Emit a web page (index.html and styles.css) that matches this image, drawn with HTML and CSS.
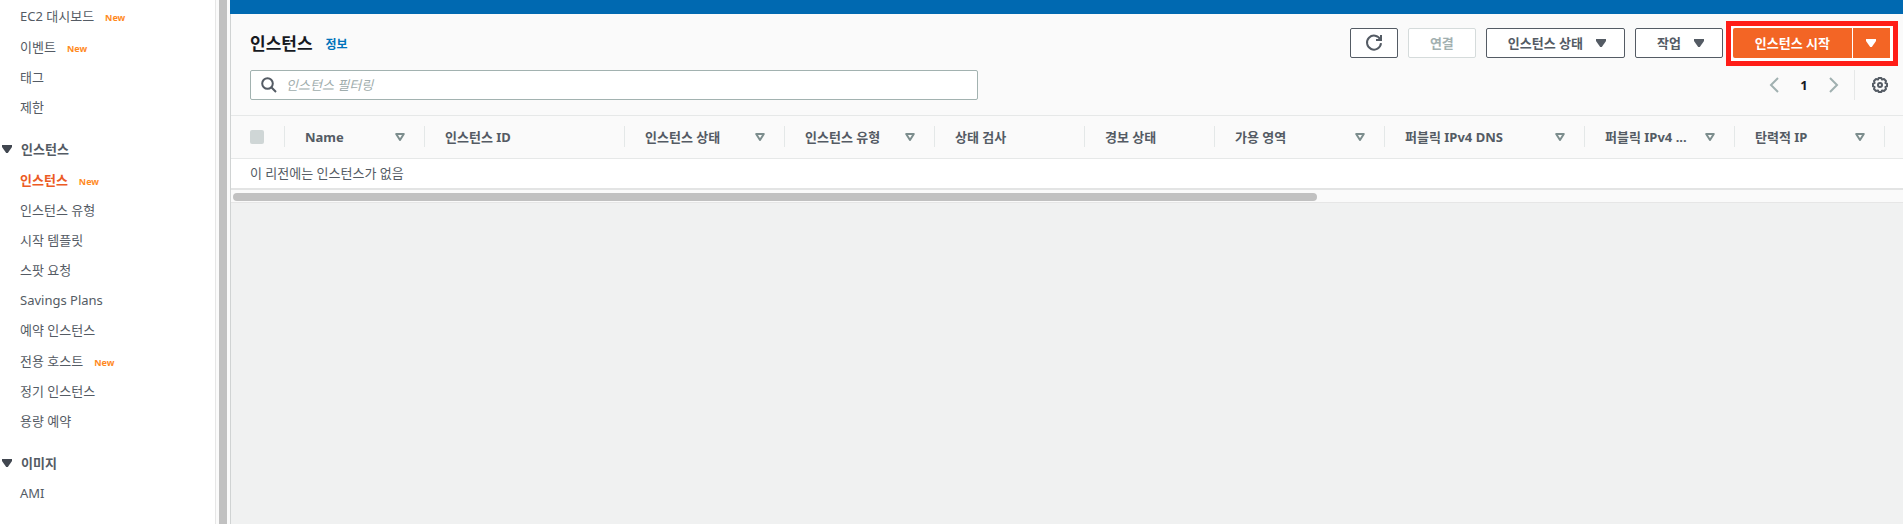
FILE: index.html
```html
<!DOCTYPE html>
<html lang="ko">
<head>
<meta charset="utf-8">
<title>인스턴스</title>
<link rel="stylesheet" href="styles.css">
</head>
<body>
<svg class="defs" aria-hidden="true">
  <symbol id="down" viewBox="0 0 10 8"><path d="M0 0H10V2L5.800 8H4.200L0 2Z" fill="currentColor"/></symbol>
  <symbol id="sort" viewBox="0 0 10 8"><path d="M1.200 1H8.800L5 7Z" fill="none" stroke="currentColor" stroke-width="2" stroke-linejoin="round"/></symbol>
</svg>
<div class="app">
  <nav class="sidebar">
    <div class="menu">
      <ul class="list">
        <li class="item has-new"><a href="#">EC2 대시보드</a><span class="new">New</span></li>
        <li class="item has-new"><a href="#">이벤트</a><span class="new">New</span></li>
        <li class="item"><a href="#">태그</a></li>
        <li class="item"><a href="#">제한</a></li>
      </ul>
      <button class="group" type="button"><svg class="caret"><use href="#down"/></svg>인스턴스</button>
      <ul class="list">
        <li class="item has-new"><a class="active" href="#">인스턴스</a><span class="new">New</span></li>
        <li class="item"><a href="#">인스턴스 유형</a></li>
        <li class="item"><a href="#">시작 템플릿</a></li>
        <li class="item"><a href="#">스팟 요청</a></li>
        <li class="item"><a href="#">Savings Plans</a></li>
        <li class="item"><a href="#">예약 인스턴스</a></li>
        <li class="item has-new"><a href="#">전용 호스트</a><span class="new">New</span></li>
        <li class="item"><a href="#">정기 인스턴스</a></li>
        <li class="item"><a href="#">용량 예약</a></li>
      </ul>
      <button class="group" type="button"><svg class="caret"><use href="#down"/></svg>이미지</button>
      <ul class="list">
        <li class="item"><a href="#">AMI</a></li>
      </ul>
    </div>
    <div class="vtrack"><div class="vthumb"></div></div>
  </nav>
  <main class="main">
    <div class="banner"></div>
    <div class="content">
      <header class="head">
        <div class="row actions">
          <h1 class="title">인스턴스</h1>
          <a class="info" href="#">정보</a>
          <div class="buttons">
            <button class="btn icon-btn" type="button" aria-label="새로 고침"><svg width="18" height="18" viewBox="0 0 18 18" fill="none" stroke="currentColor" stroke-width="2"><path d="M15.300 5.500A7 7 0 1 0 16 9.200"/><path d="M16 1V6H11"/></svg></button>
            <button class="btn connect" type="button" disabled>연결</button>
            <button class="btn menu-btn" type="button">인스턴스 상태<svg class="caret"><use href="#down"/></svg></button>
            <button class="btn menu-btn" type="button">작업<svg class="caret"><use href="#down"/></svg></button>
          </div>
          <div class="highlight">
            <button class="launch" type="button">인스턴스 시작</button>
            <button class="launch-more" type="button" aria-label="더 보기"><svg class="caret"><use href="#down"/></svg></button>
          </div>
        </div>
        <div class="row tools">
          <label class="search">
            <svg width="16" height="16" viewBox="0 0 16 16" fill="none" stroke="currentColor" stroke-width="2"><circle cx="6.500" cy="6.500" r="5.300"/><path d="M10.300 10.300L15 15"/></svg>
            <input type="search" placeholder="인스턴스 필터링" aria-label="인스턴스 필터링">
          </label>
          <div class="pager">
            <button class="page" type="button" aria-label="이전"><svg width="10" height="16" viewBox="0 0 10 16" fill="none" stroke="currentColor" stroke-width="2"><path d="M9 1L2 8L9 15"/></svg></button>
            <button class="page current" type="button">1</button>
            <button class="page" type="button" aria-label="다음"><svg width="10" height="16" viewBox="0 0 10 16" fill="none" stroke="currentColor" stroke-width="2"><path d="M1 1L8 8L1 15"/></svg></button>
          </div>
          <button class="settings" type="button" aria-label="설정"><svg width="16" height="16" viewBox="0 0 16 16" fill="none" stroke="currentColor"><path stroke-width="2" stroke-linejoin="round" d="M6.600 1H9.400L10 2.600L12 2L14 4L13.400 6L15 6.600V9.400L13.400 10L14 12L12 14L10 13.400L9.400 15H6.600L6 13.400L4 14L2 12L2.600 10L1 9.400V6.600L2.600 6L2 4L4 2L6 2.600Z"/><circle cx="8" cy="8" r="2" stroke-width="2"/></svg></button>
        </div>
      </header>
      <div class="scroller">
        <table class="grid">
          <colgroup><col class="w55"><col class="w140"><col class="w200"><col class="w160"><col class="w150"><col class="w150"><col class="w130"><col class="w170"><col class="w200"><col class="w150"><col class="w150"><col></colgroup>
          <thead>
            <tr>
              <th><div class="cell pick"><input type="checkbox" disabled aria-label="모두 선택"></div></th>
              <th><div class="cell">Name<svg class="caret"><use href="#sort"/></svg></div></th>
              <th><div class="cell">인스턴스 ID</div></th>
              <th><div class="cell">인스턴스 상태<svg class="caret"><use href="#sort"/></svg></div></th>
              <th><div class="cell">인스턴스 유형<svg class="caret"><use href="#sort"/></svg></div></th>
              <th><div class="cell">상태 검사</div></th>
              <th><div class="cell">경보 상태</div></th>
              <th><div class="cell">가용 영역<svg class="caret"><use href="#sort"/></svg></div></th>
              <th><div class="cell">퍼블릭 IPv4 DNS<svg class="caret"><use href="#sort"/></svg></div></th>
              <th><div class="cell">퍼블릭 IPv4 ...<svg class="caret"><use href="#sort"/></svg></div></th>
              <th><div class="cell">탄력적 IP<svg class="caret"><use href="#sort"/></svg></div></th>
              <th></th>
            </tr>
          </thead>
          <tbody><tr><td colspan="12">이 리전에는 인스턴스가 없음</td></tr></tbody>
        </table>
      </div>
      <div class="htrack"><div class="hthumb"></div></div>
    </div>
  </main>
</div>
</body>
</html>
```
FILE: styles.css
```css
* { box-sizing: border-box; }
body {
  margin: 0;
  background: #f0f1f1;
  color: #545b64;
  font: 13px/20px "Noto Sans", "Noto Sans CJK KR", sans-serif;
}
button, input { font: inherit; color: inherit; }
button { margin: 0; padding: 0; border: 0; background: none; }
a { color: inherit; text-decoration: none; }
svg { display: block; flex: none; }
.defs { position: absolute; width: 0; height: 0; }
.caret { width: 10px; height: 8px; }

.app { display: flex; min-height: 100vh; }

.sidebar { display: flex; flex: none; width: 230px; background: #fff; }
.menu { flex: 1; }
.list { margin: 0; padding: 0 0 0 20px; list-style: none; }
.item { display: flex; align-items: center; gap: 11px; height: 30px; }
.has-new { height: 31px; }
.active { color: #ec5b24; font-weight: 700; }
.new { padding-top: 4px; color: #ff8a1f; font-size: 9px; line-height: 16px; font-weight: 700; }
.group { display: flex; align-items: center; gap: 9px; height: 31px; margin: 11px 0 0 2px; font-weight: 700; }
.group .caret { color: #414750; }
.vtrack { width: 15px; padding: 0 3px; border-left: 1px solid #e6e6e6; background: #fafafa; }
.vthumb { width: 8px; height: 100%; background: #c1c1c1; }

.main { flex: 1; display: flex; flex-direction: column; min-width: 0; }
.banner { height: 14px; background: #0069b1; }
.content { flex: 1; border-left: 1px solid #d0d3d3; }
.head { padding: 7px 0 15px 19px; background: #fafafa; border-bottom: 1px solid #e6e8e8; }
.row { display: flex; align-items: center; }
.title { margin: 0; color: #16191f; font-size: 17px; line-height: 24px; font-weight: 700; }
.info { margin: 2px 0 0 13px; color: #0073bb; font-size: 12px; font-weight: 700; }
.buttons { display: flex; align-self: flex-start; gap: 10px; margin-left: auto; padding-top: 7px; }
.btn { display: flex; align-items: center; justify-content: center; height: 30px; border: 1px solid #545b64; border-radius: 2px; background: #fff; font-weight: 700; }
.icon-btn { width: 48px; }
.connect { padding: 0 21px; border-color: #d5dbdb; color: #a2b0b0; }
.menu-btn { gap: 13px; padding: 0 18px 0 21px; }
.highlight { display: flex; gap: 1px; margin: 0 5px 0 3px; padding: 2px 3px 3px 2px; border: 5px solid #ff1d17; background: #fff; }
.launch, .launch-more { height: 30px; background: #f36525; color: #fff; font-weight: 700; }
.launch { padding: 0 22px; border-radius: 2px 0 0 2px; }
.launch-more { padding: 0 14px 0 13px; }

.tools { margin-top: 4px; }
.search { display: flex; align-items: center; gap: 9px; flex: 0 1 728px; height: 30px; padding: 0 10px; border: 1px solid #a2b2b0; border-radius: 2px; background: #fff; }
.search input { flex: 1; min-width: 0; padding: 0; border: 0; outline: 0; background: none; }
.search input::placeholder { color: #a0adad; font-style: italic; opacity: 1; }
.pager { display: flex; margin-left: auto; margin-right: 5px; }
.page { display: grid; place-items: center; width: 30px; height: 30px; color: #a0b0b0; }
.current { color: #16191f; font-weight: 700; }
.settings { display: flex; align-items: center; height: 30px; padding: 0 15px 0 17px; border-left: 1px solid #e6e8e8; }

.scroller { overflow: hidden; }
.grid { width: 154%; table-layout: fixed; border-collapse: collapse; }
.grid th { height: 42px; padding: 0; background: #fafafa; text-align: left; }
.grid td { height: 30px; padding: 0 19px; border-top: 1px solid #e6e8e8; background: #fff; }
.cell { display: flex; align-items: center; justify-content: space-between; height: 21px; padding: 0 19px 0 20px; border-right: 1px solid #e4e8e8; white-space: nowrap; }
.cell .caret { color: #7c8d8d; }
.pick { padding-left: 19px; }
.pick input { appearance: none; width: 14px; height: 14px; margin: 0; border-radius: 2px; background: #cfd6d6; }
.w55 { width: 54px; }
.w130 { width: 130px; }
.w140 { width: 140px; }
.w150 { width: 150px; }
.w160 { width: 160px; }
.w170 { width: 170px; }
.w200 { width: 200px; }
.htrack { height: 15px; padding: 3px 2px 2px; border-top: 2px solid #e3e4e4; border-bottom: 1px solid #e6e6e6; background: #fafafa; }
.hthumb { width: 65%; height: 8px; border-radius: 4px; background: #c1c1c1; }
```
